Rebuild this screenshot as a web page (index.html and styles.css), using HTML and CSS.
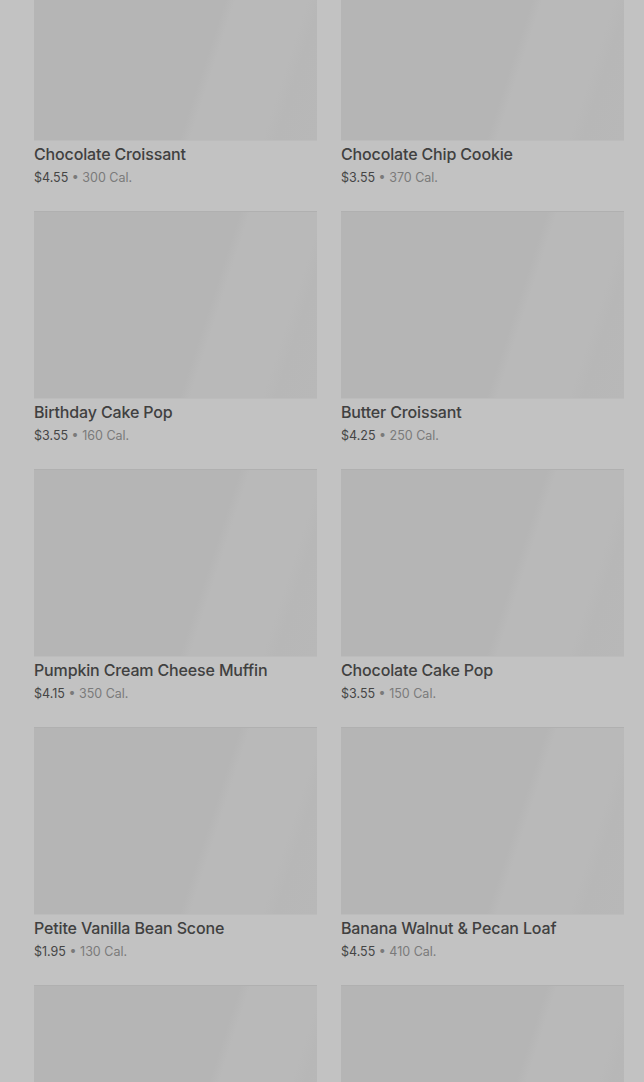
FILE: index.html
```html
<!DOCTYPE html>
<html lang="en">
<head>
    <meta charset="UTF-8">
    <meta name="viewport" content="width=device-width, initial-scale=1.0">
    <title>Bakery</title>
    <link rel="stylesheet" href="styles.css">
</head>
<body>
    <div class="menu-grid">
        <div class="item">
            <div class="thumb"></div>
            <div class="name">Chocolate Croissant</div>
            <div class="meta"><span class="price">$4.55</span> • 300 Cal.</div>
        </div>
        <div class="item">
            <div class="thumb"></div>
            <div class="name">Chocolate Chip Cookie</div>
            <div class="meta"><span class="price">$3.55</span> • 370 Cal.</div>
        </div>
        <div class="item">
            <div class="thumb"></div>
            <div class="name">Birthday Cake Pop</div>
            <div class="meta"><span class="price">$3.55</span> • 160 Cal.</div>
        </div>
        <div class="item">
            <div class="thumb"></div>
            <div class="name">Butter Croissant</div>
            <div class="meta"><span class="price">$4.25</span> • 250 Cal.</div>
        </div>
        <div class="item">
            <div class="thumb"></div>
            <div class="name">Pumpkin Cream Cheese Muffin</div>
            <div class="meta"><span class="price">$4.15</span> • 350 Cal.</div>
        </div>
        <div class="item">
            <div class="thumb"></div>
            <div class="name">Chocolate Cake Pop</div>
            <div class="meta"><span class="price">$3.55</span> • 150 Cal.</div>
        </div>
        <div class="item">
            <div class="thumb"></div>
            <div class="name">Petite Vanilla Bean Scone</div>
            <div class="meta"><span class="price">$1.95</span> • 130 Cal.</div>
        </div>
        <div class="item">
            <div class="thumb"></div>
            <div class="name">Banana Walnut &amp; Pecan Loaf</div>
            <div class="meta"><span class="price">$4.55</span> • 410 Cal.</div>
        </div>
        <div class="item">
            <div class="thumb"></div>
        </div>
        <div class="item">
            <div class="thumb"></div>
        </div>
    </div>
</body>
</html>
```

FILE: styles.css
```css
html, body {
    height: 100%;
    overflow: hidden;
}
body {
    margin: 0;
    background: #c2c2c2;
    font-family: Inter, Roboto, 'Liberation Sans', sans-serif;
    color: #404040;
}
.menu-grid {
    display: grid;
    grid-template-columns: 283px 283px;
    column-gap: 24px;
    row-gap: 24px;
    padding: 0 20px 0 34px;
    margin-top: -47px;
}
.thumb {
    height: 188px;
    background: linear-gradient(108deg, #b5b5b5 0%, #b5b5b5 60%, #b9b9b9 63%, #b9b9b9 84%, #b7b7b7 88%, #b8b8b8 100%);
    border-top: 1px solid #b0b0b0;
    border-bottom: 1px solid #bcbcbc;
    box-sizing: border-box;
}
.name {
    margin-top: 3px;
    font-size: 16px;
    line-height: 20px;
    font-weight: 500;
    letter-spacing: -0.15px;
    color: #404040;
}
.meta {
    margin-top: 5px;
    font-size: 12.5px;
    line-height: 18px;
    color: #7a7a7a;
}
.price {
    color: #454545;
}
```
